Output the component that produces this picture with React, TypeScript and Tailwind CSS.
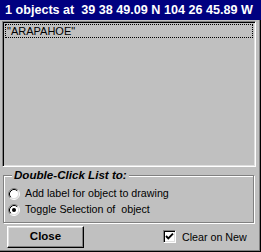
function Radio({ checked }: { checked?: boolean }) {
  return (
    <svg width="12" height="12" viewBox="0 0 12 12" className="shrink-0">
      <circle cx="6" cy="6" r="4.5" fill="#fff" />
      <path d="M2.11 9.89 A5.5 5.5 0 0 1 9.89 2.11" fill="none" stroke="#808080" strokeWidth="1" />
      <path d="M9.89 2.11 A5.5 5.5 0 0 1 2.11 9.89" fill="none" stroke="#fff" strokeWidth="1" />
      <path d="M2.82 9.18 A4.5 4.5 0 0 1 9.18 2.82" fill="none" stroke="#000" strokeWidth="1" />
      <path d="M9.18 2.82 A4.5 4.5 0 0 1 2.82 9.18" fill="none" stroke="#dfdfdf" strokeWidth="1" />
      {checked && <circle cx="6" cy="6" r="2" fill="#000" />}
    </svg>
  )
}

export default function App() {
  return (
    <div className="w-[261px] h-[252px] bg-[#c0c0c0] flex flex-col shadow-[inset_-1px_-1px_0_#000,inset_-2px_-2px_0_#808080] font-['Liberation_Sans',sans-serif] text-[10.7px] text-black">
      <div className="h-[20px] bg-[#000080] text-white font-bold text-[12.6px] pl-[5px] flex items-center whitespace-pre">
        1 objects at  39 38 49.09 N 104 26 45.89 W
      </div>

      <div className="ml-[2px] mt-[1px] w-[254px] h-[146px] border border-t-[#808080] border-l-[#808080] border-b-white border-r-white shadow-[inset_1px_1px_0_#000,inset_-1px_-1px_0_#dfdfdf] p-[2px]">
        <div className="h-[14px] border border-dotted border-black pl-[1px] leading-[12px] text-[11px] whitespace-pre">
          "ARAPAHOE"
        </div>
      </div>

      <div className="relative ml-[3px] mt-[8px] w-[251px] h-[48px] border border-[#808080] shadow-[inset_1px_1px_0_#fff,1px_1px_0_#fff] pl-[4px] pt-[10px] flex flex-col gap-[1px]">
        <div className="absolute left-[8px] top-[-8px] px-[2px] bg-[#c0c0c0] font-bold italic text-[11.6px] leading-[14px]">
          Double-Click List to:
        </div>
        <label className="flex items-center gap-[5px] h-[15px] leading-[15px]">
          <Radio />
          <span>Add label for object to drawing</span>
        </label>
        <label className="flex items-center gap-[5px] h-[15px] leading-[15px] whitespace-pre">
          <Radio checked />
          <span>Toggle Selection of  object</span>
        </label>
      </div>

      <div className="flex items-center mt-[3px]">
        <button className="ml-[7px] w-[77px] h-[22px] border border-t-white border-l-white border-b-black border-r-black shadow-[inset_-1px_-1px_0_#808080,inset_1px_1px_0_#dfdfdf] font-bold text-[11.5px] flex items-center justify-center">
          Close
        </button>
        <label className="ml-[79px] flex items-center gap-[6px]">
          <span className="w-[13px] h-[13px] bg-white border border-t-[#808080] border-l-[#808080] border-b-white border-r-white shadow-[inset_1px_1px_0_#000,inset_-1px_-1px_0_#dfdfdf] flex items-center justify-center">
            <svg width="11" height="11" viewBox="0 0 11 11">
              <path d="M2 5 L4.3 7.3 L9 2.6" fill="none" stroke="#000" strokeWidth="1.9" />
            </svg>
          </span>
          <span>Clear on New</span>
        </label>
      </div>
    </div>
  )
}
